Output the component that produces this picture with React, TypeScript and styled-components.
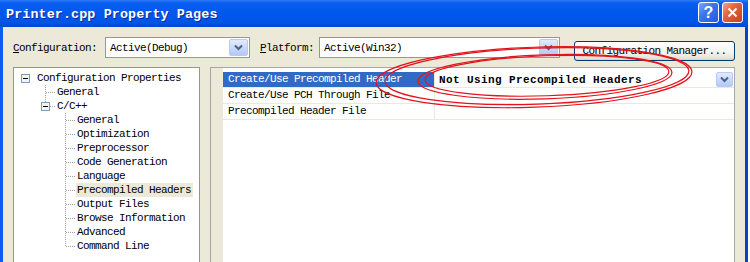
import React from 'react';
import styled, { createGlobalStyle } from 'styled-components';

const Global = createGlobalStyle`
  html, body { margin: 0; padding: 0; width: 750px; height: 262px; overflow: hidden; background: #ffffff; }
  #root { width: 750px; height: 262px; }
`;

const mono = `"Liberation Mono", "DejaVu Sans Mono", monospace`;

const Screen = styled.div`
  position: relative;
  width: 750px;
  height: 262px;
  overflow: hidden;
  display: flex;
  background: #ffffff;
`;

const Window = styled.div`
  width: 748px;
  height: 320px;
  flex: none;
  display: flex;
  flex-direction: column;
`;

const TitleBar = styled.div`
  height: 27px;
  flex: none;
  display: flex;
  align-items: center;
  padding: 0 5px 0 6px;
  background: linear-gradient(#2f7cf8 0%, #0a5ff0 10%, #0058ee 45%, #0054e6 85%, #0046cf 100%);
`;

const Title = styled.div`
  flex: 1;
  font-family: ${mono};
  font-weight: bold;
  font-size: 13.4px;
  letter-spacing: 0.1px;
  color: #ffffff;
  text-shadow: 1px 1px 0 #0a2a9a;
  padding-top: 1px;
`;

const CaptionButtons = styled.div`
  display: flex;
  gap: 3px;
  margin-top: -2px;
`;

const CaptionButton = styled.div<{ $kind: 'help' | 'close' }>`
  width: 21px;
  height: 21px;
  box-sizing: border-box;
  border: 1px solid #ffffff;
  border-radius: 3px;
  display: flex;
  align-items: center;
  justify-content: center;
  color: #ffffff;
  font-family: "Liberation Sans", Arial, sans-serif;
  font-weight: bold;
  font-size: 16px;
  background: ${p =>
    p.$kind === 'help'
      ? 'linear-gradient(135deg, #7aa8ff 0%, #3b77f2 40%, #1f5be0 100%)'
      : 'linear-gradient(135deg, #f0a58a 0%, #e2643c 40%, #c7401c 100%)'};
`;

const Body = styled.div`
  flex: 1;
  display: flex;
  flex-direction: column;
  background: #ece9d8;
  border-left: 3px solid #0c5df0;
  border-right: 3px solid #0a3fd0;
  padding: 10px 10px 0 10px;
`;

const Toolbar = styled.div`
  height: 21px;
  display: flex;
  align-items: flex-start;
`;

const Label = styled.span<{ $gap: number }>`
  font-family: ${mono};
  font-size: 11px;
  letter-spacing: -0.6px;
  line-height: 22px;
  color: #000000;
  margin-right: ${p => p.$gap}px;
  white-space: nowrap;
  u { text-decoration: underline; }
`;

const Combo = styled.div<{ $w: number }>`
  width: ${p => p.$w}px;
  height: 21px;
  box-sizing: border-box;
  border: 1px solid #7f9db9;
  background: #ffffff;
  display: flex;
  align-items: center;
  padding: 1px 1px 1px 4px;
  margin-right: 10px;
`;

const ComboText = styled.span<{ $bold?: boolean }>`
  flex: 1;
  font-family: ${mono};
  font-size: 11px;
  letter-spacing: ${p => (p.$bold ? '0.4px' : '-0.6px')};
  font-weight: ${p => (p.$bold ? 'bold' : 'normal')};
  color: #000000;
  white-space: nowrap;
`;

const DropArrow = styled.span<{ $size: number }>`
  width: ${p => p.$size + 2}px;
  height: ${p => p.$size}px;
  box-sizing: border-box;
  border: 1px solid #b9cbf3;
  border-radius: 2px;
  background: linear-gradient(#e3ecfe, #c4d6fb 60%, #b3c8f7);
  display: flex;
  align-items: center;
  justify-content: center;
  flex: none;
`;

const XPButton = styled.div`
  margin-left: 4px;
  margin-top: 4px;
  width: 161px;
  height: 20px;
  box-sizing: border-box;
  border: 1px solid #003c74;
  border-radius: 3px;
  background: linear-gradient(#ffffff, #f3f2ee 60%, #e6e3d8 90%, #d6d0c5);
  display: flex;
  align-items: center;
  justify-content: center;
  font-family: ${mono};
  font-size: 11px;
  letter-spacing: -0.6px;
  color: #000000;
  white-space: nowrap;
`;

const Main = styled.div`
  margin-top: 9px;
  display: flex;
  gap: 10px;
  flex: 1;
`;

const TreePanel = styled.div`
  width: 187px;
  box-sizing: border-box;
  border: 1px solid #8b97a9;
  background: #ffffff;
  padding: 3px 0 0 2px;
  display: flex;
  flex-direction: column;
`;

const TreeRow = styled.div`
  height: 14px;
  flex: none;
  display: flex;
  align-items: center;
`;

const TreeLabel = styled.span<{ $selected?: boolean }>`
  font-family: ${mono};
  font-size: 11px;
  letter-spacing: -0.6px;
  line-height: 14px;
  height: 14px;
  padding: 0 2px 0 1px;
  color: #000000;
  white-space: nowrap;
  background: ${p => (p.$selected ? '#ece9d8' : 'transparent')};
`;

const GridPanel = styled.div`
  flex: 1;
  display: flex;
  border: 1px solid #a7a6aa;
  background: #ffffff;
`;

const Gutter = styled.div`
  width: 12px;
  flex: none;
  background: #ece9d8;
`;

const GridRows = styled.div`
  flex: 1;
  display: flex;
  flex-direction: column;
  padding-top: 4px;
`;

const PropRow = styled.div`
  display: grid;
  grid-template-columns: 212px 1fr;
  height: 16px;
  flex: none;
  box-sizing: border-box;
  border-bottom: 1px solid #ece9d8;
`;

const NameCell = styled.div<{ $selected?: boolean }>`
  font-family: ${mono};
  font-size: 11px;
  letter-spacing: -0.6px;
  line-height: 15px;
  padding-left: 5px;
  white-space: nowrap;
  color: ${p => (p.$selected ? '#ffffff' : '#000000')};
  background: ${p => (p.$selected ? '#316ac5' : '#ffffff')};
  border-right: 1px solid #ece9d8;
`;

const ValueCell = styled.div`
  display: flex;
  align-items: center;
  padding-left: 4px;
  padding-right: 1px;
`;

const Overlay = styled.svg`
  position: absolute;
  left: 0;
  top: 0;
  pointer-events: none;
`;

const Chevron = () => (
  <svg width="9" height="7" viewBox="0 0 9 7">
    <path d="M1 1.5 L4.5 5 L8 1.5" fill="none" stroke="#4d6185" strokeWidth="2" />
  </svg>
);

type Conn = 'none' | 'tee' | 'ell' | 'box' | 'boxEll' | 'line';

const Slot = ({ kind }: { kind: Conn }) => (
  <svg width="20" height="14" viewBox="0 0 20 14" shapeRendering="crispEdges" style={{ flex: 'none' }}>
    {(kind === 'tee' || kind === 'line') && (
      <line x1="9.5" y1="0" x2="9.5" y2="14" stroke="#a0a0a0" strokeDasharray="1 1" />
    )}
    {kind === 'ell' && <line x1="9.5" y1="0" x2="9.5" y2="8" stroke="#a0a0a0" strokeDasharray="1 1" />}
    {(kind === 'tee' || kind === 'ell') && (
      <line x1="10" y1="7.5" x2="20" y2="7.5" stroke="#a0a0a0" strokeDasharray="1 1" />
    )}
    {kind === 'boxEll' && (
      <>
        <line x1="9.5" y1="0" x2="9.5" y2="3" stroke="#a0a0a0" strokeDasharray="1 1" />
        <line x1="14" y1="7.5" x2="20" y2="7.5" stroke="#a0a0a0" strokeDasharray="1 1" />
      </>
    )}
    {(kind === 'box' || kind === 'boxEll') && (
      <>
        <rect x="5.5" y="3.5" width="8" height="8" fill="#f4f4ee" stroke="#7f9db9" />
        <line x1="7" y1="7.5" x2="12" y2="7.5" stroke="#000000" />
      </>
    )}
  </svg>
);

type TreeItem = { label: string; slots: Conn[]; selected?: boolean };

const items: TreeItem[] = [
  { label: 'Configuration Properties', slots: ['box'] },
  { label: 'General', slots: ['none', 'tee'] },
  { label: 'C/C++', slots: ['none', 'boxEll'] },
  { label: 'General', slots: ['none', 'none', 'tee'] },
  { label: 'Optimization', slots: ['none', 'none', 'tee'] },
  { label: 'Preprocessor', slots: ['none', 'none', 'tee'] },
  { label: 'Code Generation', slots: ['none', 'none', 'tee'] },
  { label: 'Language', slots: ['none', 'none', 'tee'] },
  { label: 'Precompiled Headers', slots: ['none', 'none', 'tee'], selected: true },
  { label: 'Output Files', slots: ['none', 'none', 'tee'] },
  { label: 'Browse Information', slots: ['none', 'none', 'tee'] },
  { label: 'Advanced', slots: ['none', 'none', 'tee'] },
  { label: 'Command Line', slots: ['none', 'none', 'ell'] },
];

const props = [
  { name: 'Create/Use Precompiled Header', value: 'Not Using Precompiled Headers', selected: true },
  { name: 'Create/Use PCH Through File', value: '' },
  { name: 'Precompiled Header File', value: '' },
];

export default function App() {
  return (
    <Screen>
      <Global />
      <Window>
        <TitleBar>
          <Title>Printer.cpp Property Pages</Title>
          <CaptionButtons>
            <CaptionButton $kind="help">?</CaptionButton>
            <CaptionButton $kind="close">
              <svg width="11" height="11" viewBox="0 0 11 11">
                <path d="M1.5 1.5 L9.5 9.5 M9.5 1.5 L1.5 9.5" stroke="#ffffff" strokeWidth="2" />
              </svg>
            </CaptionButton>
          </CaptionButtons>
        </TitleBar>
        <Body>
          <Toolbar>
            <Label $gap={8}>
              <u>C</u>onfiguration:
            </Label>
            <Combo $w={145}>
              <ComboText>Active(Debug)</ComboText>
              <DropArrow $size={17}>
                <Chevron />
              </DropArrow>
            </Combo>
            <Label $gap={5}>
              <u>P</u>latform:
            </Label>
            <Combo $w={241}>
              <ComboText>Active(Win32)</ComboText>
              <DropArrow $size={17}>
                <Chevron />
              </DropArrow>
            </Combo>
            <XPButton>
              C<u>o</u>nfiguration Manager...
            </XPButton>
          </Toolbar>
          <Main>
            <TreePanel>
              {items.map((it, i) => (
                <TreeRow key={i}>
                  {it.slots.map((s, j) => (
                    <Slot key={j} kind={s} />
                  ))}
                  <TreeLabel $selected={it.selected}>{it.label}</TreeLabel>
                </TreeRow>
              ))}
            </TreePanel>
            <GridPanel>
              <Gutter />
              <GridRows>
                {props.map((p, i) => (
                  <PropRow key={i}>
                    <NameCell $selected={p.selected}>{p.name}</NameCell>
                    <ValueCell>
                      <ComboText $bold>{p.value}</ComboText>
                      {p.selected && (
                        <DropArrow $size={15}>
                          <Chevron />
                        </DropArrow>
                      )}
                    </ValueCell>
                  </PropRow>
                ))}
              </GridRows>
            </GridPanel>
          </Main>
        </Body>
      </Window>
      <Overlay width="750" height="262" viewBox="0 0 750 262">
        <g fill="none" stroke="#e3121c" strokeWidth="1.2" transform="rotate(-2 540 77)">
          <ellipse cx="534" cy="77" rx="158" ry="30" />
          <ellipse cx="537" cy="76" rx="152" ry="28" />
          <ellipse cx="545" cy="77" rx="127" ry="22" />
          <ellipse cx="547" cy="76" rx="122" ry="20" />
        </g>
      </Overlay>
    </Screen>
  );
}
